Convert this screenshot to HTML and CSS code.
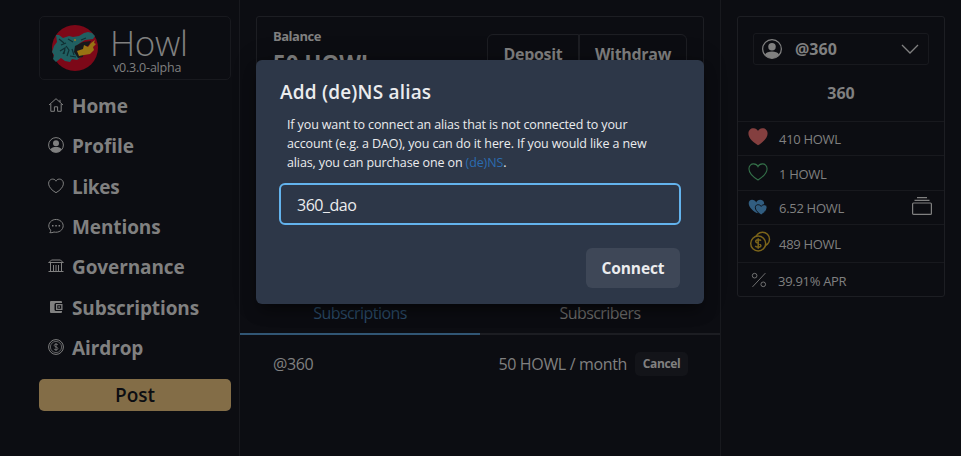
FILE: index.html
```html
<!DOCTYPE html>
<html lang="en">
<head>
<meta charset="utf-8">
<title>Howl</title>
<link rel="stylesheet" href="styles.css">
</head>
<body>
<div class="app">
  <aside class="sidebar">
    <div class="brand">
      <svg class="logo" viewBox="0 0 48 48"><circle cx="24" cy="24" r="23" fill="#7d0818"/><path d="M5 11l3 0 4 3 6-2 4 1 6-1 5-3 4-1 4 1 3 3-2 3-8 1-5 3-4 4 1 5 4 5-4 3-5-1-2 3-5-1-4-3-5 4-3-3 1-4-2-3 2-6 3-4z" fill="#205f61"/><path d="M24 22l8-4 8-1-2 4-5 4-1 8-5 1-4-6z" fill="#17181b"/><path d="M26 27l6-2 1-4 4 2 3-4 4-3-1 3 2 1-3 3 1 3-4 4-6 1-5 1z" fill="#987313"/><path d="M8 15l5 4M10 21l5-2M9 27l5-3-1 6M17 15l5 3M19 32l6 1M15 22l3 4-2 6M30 16l5-2M12 30l2-4M21 25l2 6" fill="none" stroke="#102e32" stroke-width="1.200"/><circle cx="24" cy="16" r="1" fill="#9a7a20"/></svg>
      <div class="brand-text"><span class="name">Howl</span><span class="version">v0.3.0-alpha</span></div>
    </div>
    <nav>
      <a><svg viewBox="0 0 16 16"><path d="M1 8l7-6.300L15 8M2.800 7v7.300h3.600V9.800h3.200v4.500h3.600V7M12 5V2.800"/></svg><b>Home</b></a>
      <a><svg viewBox="0 0 16 16"><circle cx="8" cy="8" r="7.400"/><circle class="fill" cx="8" cy="6.200" r="3"/><path class="fill" d="M2.300 12.500c1.200-2 3.200-2.500 5.700-2.500s4.500.5 5.700 2.500A7.400 7.400 0 0 1 2.300 12.500z"/></svg><b>Profile</b></a>
      <a><svg viewBox="0 0 16 16"><path d="M8 14.700C-2.800 8.500.2 1 4.700 1.100 6.500 1.100 7.500 2.100 8 3.200c.5-1.100 1.500-2.100 3.300-2.100C15.800 1 18.800 8.500 8 14.700z"/></svg><b class="tight">Likes</b></a>
      <a><svg viewBox="0 0 16 16"><path d="M2.700 12.200A7.200 6.400 0 1 1 6 14c-1.300.6-2.700.9-4.200.7.700-.8 1-1.600.9-2.500z"/><path class="fill" d="M4 7h1.500v1.500H4zM7.300 7h1.500v1.500H7.300zM10.600 7h1.500v1.500h-1.500z"/></svg><b>Mentions</b></a>
      <a><svg viewBox="0 0 16 16"><path d="M3.500 2h9L15 4.500H1zM2.500 4.500V13M5.500 7v6M8 7v6M10.500 7v6M13.500 4.500V13M.5 13.500h15M.5 4.500h15"/></svg><b>Governance</b></a>
      <a><svg viewBox="0 0 16 16"><path class="solid" fill-rule="evenodd" d="M3 2h10a1 1 0 0 1 1 1v1H8a1.500 1.500 0 0 0-1.500 1.500v5A1.500 1.500 0 0 0 8 12h6v1a1 1 0 0 1-1 1H3a1 1 0 0 1-1-1V3a1 1 0 0 1 1-1zM8 5h6.500v6H8zm1.300 1.300v3.400h3.900V6.300z"/><path class="solid" d="M10.300 7.200h1.600v1.600h-1.600z"/></svg><b>Subscriptions</b></a>
      <a><svg viewBox="0 0 16 16"><circle cx="8" cy="8" r="7.400"/><circle cx="8" cy="8" r="5.600" stroke-width=".7"/><path d="M10 6C9.500 4.900 6.200 4.700 6.200 6.400c0 1.700 3.700 1.300 3.700 3.100 0 1.800-3.400 1.600-4 .4M8 4v8" stroke-width=".8"/></svg><b>Airdrop</b></a>
    </nav>
    <button class="post"><span>Post</span></button>
  </aside>
  <main>
    <section class="balance">
      <div><div class="label">Balance</div><div class="amount">50 HOWL</div></div>
      <div class="actions"><button><span>Deposit</span></button><button><span>Withdraw</span></button></div>
    </section>
    <div class="tabs"><div class="tab active"><span>Subscriptions</span></div><div class="tab"><span>Subscribers</span></div></div>
    <div class="sub-row"><span>@360</span><span class="price">50 HOWL / month</span><button class="cancel">Cancel</button></div>
  </main>
  <aside class="wallet">
    <div class="card">
      <div class="select"><svg class="user" viewBox="0 0 16 16"><circle cx="8" cy="8" r="7.500"/><circle class="fill" cx="8" cy="6.200" r="3"/><path class="fill" d="M2.300 12.500c1.200-2 3.200-2.500 5.700-2.500s4.500.5 5.700 2.500A7.400 7.400 0 0 1 2.300 12.500z"/></svg><b>@360</b><svg class="chev" viewBox="0 0 18 10"><path d="M1 1l8 8 8-8"/></svg></div>
      <div class="title">360</div>
      <div class="row"><svg class="red" viewBox="0 0 22 20"><path d="M11 19C-5 9.500.500 0 6.200.5 8.700.600 10.300 2 11 3.500 11.700 2 13.300.600 15.800.5 21.500 0 27 9.500 11 19z"/></svg><span>410 HOWL</span></div>
      <div class="row r2"><svg class="green" viewBox="0 0 22 20"><path d="M11 18.700C-4 9.700 1 .8 6.200 1.100 8.700 1.200 10.300 2.600 11 4.100c.7-1.500 2.300-2.900 4.800-3C21 .8 26 9.700 11 18.700z"/></svg><span>1 HOWL</span></div>
      <div class="row r3"><svg class="blue" viewBox="0 0 22 20"><path d="M10 17C-2 10-.500 2 4.500 2c2.200 0 3.700 1.200 4.500 3 .8-1.800 2.300-3 4.500-3C16 2 17.800 4 17.800 6.500z"/><path class="front" d="M14.500 18.700c-9-5.700-7-11.500-3.300-11.200 1.600.1 2.800.8 3.300 1.800.5-1 1.700-1.700 3.300-1.800 3.700-.3 5.700 5.500-3.300 11.200z"/></svg><span>6.52 HOWL</span><svg class="stack" viewBox="0 0 20 18"><rect x=".6" y="6" width="18.800" height="11.400" rx="1"/><path d="M2.500 3.300h15M5 .7h10"/></svg></div>
      <div class="row r4"><svg class="gold" viewBox="0 0 22 22"><circle cx="13.500" cy="8.200" r="7"/><circle class="front" cx="9.200" cy="12.500" r="7.500"/><path d="M12 9.700C11 8.200 6.700 8.400 6.700 10.400c0 2.400 5.200 1.500 5.200 4 0 2.200-4.600 2.200-5.600.5M9.200 7.200v10.600"/></svg><span>489 HOWL</span></div>
      <div class="row r5"><svg class="pct" viewBox="0 0 22 20"><circle cx="6.500" cy="5" r="2.700"/><circle cx="16.500" cy="15" r="2.700"/><path d="M19 2L4 18"/></svg><span>39.91% APR</span></div>
    </div>
  </aside>
</div>
<div class="modal">
  <h1><span>Add (de)NS alias</span></h1>
  <p><span>If you want to connect an alias that is not connected to your</span><br><span>account (e.g. a DAO), you can do it here. If you would like a new</span><br><span>alias, you can purchase one on <a>(de)NS</a>.</span></p>
  <div class="input"><span>360_dao</span></div>
  <button class="connect"><span>Connect</span></button>
</div>
</body>
</html>
```
FILE: styles.css
```css
* { box-sizing: border-box; }
body { margin: 0; background: #0c0d12; color: #808080; font-family: "Open Sans", "Noto Sans", sans-serif; height: 456px; overflow: hidden; }
button { font-family: inherit; color: inherit; border: 0; background: none; padding: 0; }
svg { flex: none; fill: none; stroke: currentColor; }
span, b { white-space: nowrap; }
.fill { fill: currentColor; stroke: none; }
.solid { fill: currentColor; stroke: none; }
.app { display: grid; grid-template-columns: 240px 480px 241px; height: 456px; }
.sidebar { border-right: 1px solid #18191e; padding: 16px 8px 0 39px; }
.brand { height: 64px; border: 1px solid #18191e; border-radius: 5px; display: flex; padding: 7px 0 0 11px; }
.logo { width: 48px; height: 48px; stroke: none; }
.brand-text { margin-left: 11px; display: flex; flex-direction: column; }
.name { font-size: 35px; line-height: 37px; font-weight: 300; letter-spacing: -.3px; }
.version { font-size: 12.500px; line-height: 14px; padding-left: 3px; letter-spacing: -.2px; }
nav { padding: 6px 0 0 9px; }
nav a { display: flex; align-items: center; height: 40.330px; gap: 8px; }
nav svg { width: 16px; height: 16px; margin-top: -2px; }
nav b { font-size: 19px; line-height: 28px; letter-spacing: -.1px; }
nav b.tight { letter-spacing: -.35px; }
.post { display: block; width: 192px; height: 32px; margin-top: 10.700px; background: #836d47; border-radius: 5px; color: #0c0d12; font-size: 19px; font-weight: 600; }
main { padding-top: 16px; border-right: 1px solid #18191e; margin-right: -1px; }
.balance { margin: 0 16px; width: 448px; height: 270px; border: 1px solid #1d1e23; border-radius: 3px; padding: 8px 16px; display: flex; justify-content: space-between; }
.label { font-size: 13px; line-height: 22px; font-weight: 700; letter-spacing: -.5px; }
.amount { font-size: 22.500px; line-height: 34px; font-weight: 700; letter-spacing: -.1px; }
.actions { display: flex; margin-top: 9px; height: 40px; }
.actions button { width: 92px; border: 1px solid #1d1e23; border-radius: 6px 0 0 6px; font-size: 16px; font-weight: 700; letter-spacing: -.3px; }
.actions button + button { width: 108px; border-radius: 0 6px 6px 0; }
.tabs { display: flex; height: 49px; }
.tab { width: 240px; border-bottom: 2px solid #1c1d22; text-align: center; font-size: 16px; line-height: 24px; padding-top: 15px; color: #6c6c6c; letter-spacing: -.55px; }
.tab.active { color: #2b4b68; border-color: #315674; }
.sub-row { display: flex; align-items: center; height: 57px; padding: 0 32px 0 33px; letter-spacing: -.35px; }
.price { margin-left: auto; margin-right: 8px; }
.cancel { width: 53px; height: 24px; border-radius: 5px; background: #131419; font-size: 12px; font-weight: 700; letter-spacing: -.4px; }
.wallet { padding: 16px 16px 0 17px; }
.card { border: 1px solid #1d1e23; border-radius: 3px; height: 281px; }
.select { margin: 16px 15px 0; height: 32px; border: 1px solid #18191e; border-radius: 3px; display: flex; align-items: center; padding: 0 9px 0 8px; }
.user { width: 20px; height: 20px; }
.select b { font-size: 16px; margin-left: 13px; }
.chev { width: 18px; height: 10px; margin-left: auto; stroke-width: 1.300; }
.title { height: 56px; text-align: center; font-weight: 700; font-size: 16px; line-height: 56px; }
.row { height: 34.400px; border-top: 1px solid #18191e; display: flex; align-items: center; padding: 0 12px 0 10px; }
.row span { font-size: 13px; margin-left: 11px; letter-spacing: -.3px; font-weight: 500; }
.row svg { width: 20px; height: 20px; margin-top: -3px; }
.red { fill: #843f3f; stroke: none; }
.green { stroke: #347049; stroke-width: 1.200; }
.blue { fill: #315d80; stroke: none; }
.blue .front { stroke: #0c0d12; stroke-width: 1; }
.row.r2 { padding-top: 1px; }
.row.r3 { padding-top: 2px; }
.row .stack { width: 20px; height: 18px; margin-left: auto; margin-top: -4px; stroke-width: 1.200; }
.gold { stroke: #7b641a; stroke-width: 1.500; }
.gold .front { fill: #0c0d12; }
.row .gold { width: 22px; height: 22px; margin-left: 1px; margin-right: -3px; }
.row.r4 { height: 38px; }
.row.r5 { height: 35px; padding-top: 2px; }
.row .pct { width: 19px; height: 18px; margin-left: 1px; margin-right: -1px; }
.modal { position: absolute; left: 256px; top: 60px; width: 448px; height: 244px; background: #2d3748; color: #ebecee; border-radius: 6px; box-shadow: 0 10px 15px -3px rgba(0,0,0,.4), 0 0 25px rgba(0,0,0,.2); padding: 16px 24px; display: flex; flex-direction: column; }
h1 { font-size: 19px; line-height: 32px; font-weight: 600; margin: 0; letter-spacing: .2px; }
p { margin: 7px 0 0 7px; font-size: 12.500px; line-height: 19px; letter-spacing: -.12px; }
p a { color: #2b6cb0; }
.input { margin: 11px -1px 0; height: 42px; border: 2px solid #63b3ed; border-radius: 6px; padding: 0 16px; font-size: 16px; line-height: 40px; letter-spacing: -.5px; }
.connect { align-self: flex-end; margin-top: 23px; width: 94px; height: 40px; border-radius: 6px; background: #3e4757; font-size: 15.500px; font-weight: 700; letter-spacing: -.1px; }
```
